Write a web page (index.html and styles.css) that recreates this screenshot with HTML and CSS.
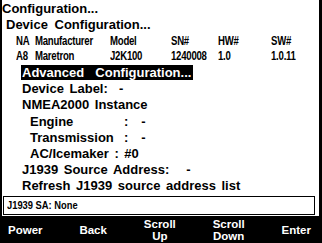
FILE: index.html
```html
<!DOCTYPE html>
<html lang="en">
  <head>
    <meta charset="UTF-8" />
    <title>Configuration</title>
    <link rel="stylesheet" href="styles.css">
  </head>
  <body>
    <div class="screen">
      <div class="title">Configuration...</div>
      <div class="subtitle">Device Configuration...</div>

      <div class="device-table">
        <span>NA</span><span>Manufacturer</span><span>Model</span><span>SN#</span><span>HW#</span><span>SW#</span>
        <span>A8</span><span>Maretron</span><span>J2K100</span><span>1240008</span><span>1.0</span><span>1.0.11</span>
      </div>

      <ul class="menu">
        <li><span class="selected">Advanced&nbsp; Configuration...</span></li>
        <li>Device Label:&nbsp; -</li>
        <li>NMEA2000 Instance</li>
        <li class="sub"><span class="field">Engine</span>:<span class="val">-</span></li>
        <li class="sub"><span class="field">Transmission</span>:<span class="val">-</span></li>
        <li class="sub">AC/Icemaker : #0</li>
        <li>J1939 Source Address: &nbsp;&nbsp;-</li>
        <li>Refresh J1939 source address list</li>
      </ul>

      <div class="status"><span>J1939 SA: None</span></div>

      <div class="keys">
        <span>Power</span>
        <span>Back</span>
        <span>Scroll<br>Up</span>
        <span>Scroll<br>Down</span>
        <span>Enter</span>
      </div>
    </div>
  </body>
</html>
```

FILE: styles.css
```css
* {
  margin: 0;
  padding: 0;
  box-sizing: border-box;
}
body {
  background: #fff;
  font-family: 'Liberation Sans', Arial, sans-serif;
  font-weight: bold;
  color: #000;
}

.screen {
  width: 322px;
  height: 243px;
  border-left: 2px solid #000;
  border-right: 3px solid #000;
  display: flex;
  flex-direction: column;
  overflow: hidden;
}

.title {
  font-size: 13px;
  line-height: 16px;
  margin-top: 1px;
}
.subtitle {
  font-size: 13px;
  line-height: 16px;
  word-spacing: 3px;
  padding-left: 4px;
}

/* narrow table font: squeeze a tall face horizontally */
.device-table {
  display: grid;
  grid-template-columns: 19px 75px 61px 47px 53px auto;
  row-gap: 3px;
  padding-left: 14px;
  margin-top: 2px;
  font-size: 12px;
  line-height: 12px;
}
.device-table span {
  display: inline-block;
  white-space: nowrap;
  transform: scaleX(0.8);
  transform-origin: left center;
  letter-spacing: -0.3px;
}

.menu {
  list-style: none;
  margin-top: 3px;
  padding-left: 20px;
  font-size: 13px;
  line-height: 16px;
  word-spacing: 2px;
}
.menu li {
  height: 16.2px;
}
.menu .sub {
  padding-left: 8px;
}
.field {
  display: inline-block;
  width: 94px;
}
.val {
  padding-left: 13px;
}
.selected {
  background: #000;
  color: #fff;
  padding: 0 2px 0 1px;
  margin-left: -1px;
  display: inline-block;
  height: 15px;
}

.status {
  margin: 1px 4px 0 1px;
  border: 1px solid #000;
  height: 19px;
  padding-left: 3px;
  font-size: 11px;
  line-height: 17px;
}
.status span {
  display: inline-block;
  transform: scaleX(0.85);
  transform-origin: left center;
}

.keys {
  margin-top: auto;
  height: 27px;
  background: #000;
  color: #fff;
  display: flex;
  justify-content: space-between;
  align-items: center;
  padding: 0 8px 0 6px;
  font-size: 11.5px;
  line-height: 12px;
  text-align: center;
}
```
